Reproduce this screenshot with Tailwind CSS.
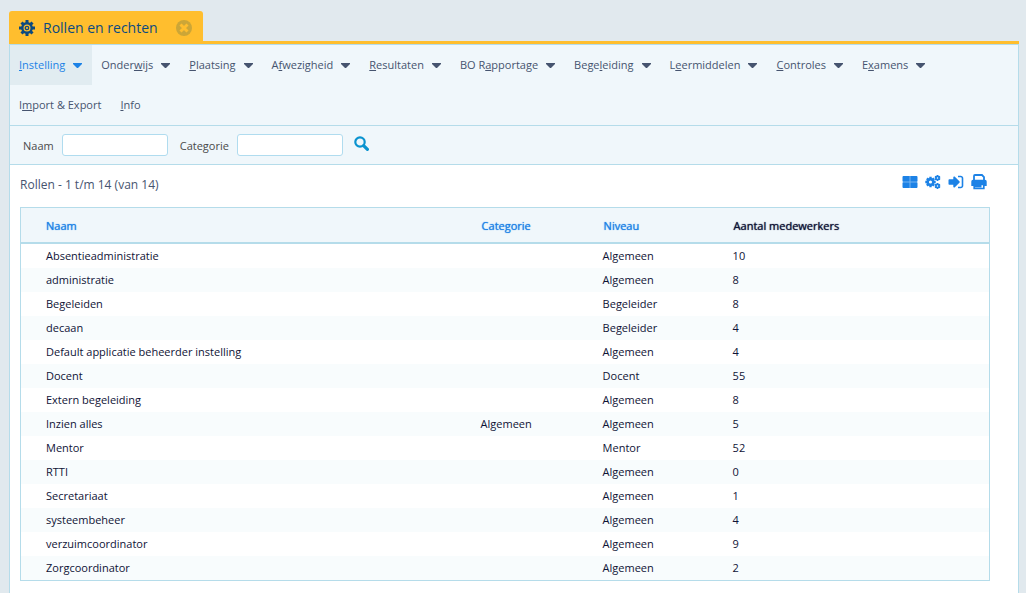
<!DOCTYPE html>
<html lang="nl">
<head>
    <meta charset="UTF-8">
    <meta name="viewport" content="width=device-width, initial-scale=1.0">
    <title>Rollen en rechten</title>
    <script src="https://cdn.jsdelivr.net/npm/@tailwindcss/browser@4"></script>
</head>
<body class="bg-[#e1e9ee] min-h-screen flex flex-col pt-[11px] pl-[9px] pr-[7px] font-['Open_Sans',sans-serif] text-[11px] leading-4 text-[#0f1336]">

    <!-- Tab -->
    <div class="flex border-b-3 border-[#ffbe2e]">
        <div class="flex items-center h-[30px] w-[194px] pl-[10px] pr-[11px] pt-[3px] rounded-t-[3px] bg-[#ffbe2e] text-[#0b4a80]">
            <svg class="size-4" viewBox="0 0 16 16" fill="none" stroke="currentColor">
                <g stroke-width="3">
                    <path d="M8 0v4M8 12v4M0 8h4M12 8h4"/>
                    <path d="M2.500 2.500l2.600 2.600M10.900 10.900l2.600 2.600M2.500 13.500l2.600-2.600M10.900 5.100l2.600-2.600"/>
                </g>
                <circle cx="8" cy="8" r="4.700" stroke-width="2.400"/>
                <circle cx="8" cy="8" r="1.700" stroke-width="1.300"/>
            </svg>
            <h1 class="ml-2 text-[14px] leading-5">Rollen en rechten</h1>
            <button class="ml-auto" aria-label="Tab sluiten">
                <svg class="size-4" viewBox="0 0 16 16">
                    <circle cx="8" cy="8" r="8" fill="#cca637"/>
                    <path d="M4.500 4.500l7 7M11.500 4.500l-7 7" stroke="#ffbe2e" stroke-width="3"/>
                </svg>
            </button>
        </div>
    </div>

    <main class="flex-1 border-x border-t border-[#b5dcea] bg-white">

        <!-- Menu -->
        <nav class="flex flex-wrap border-b border-[#b5dcea] bg-[#f0f7fb] text-[#46546f]" id="menu">
            <a href="#" class="flex items-center gap-2 h-10 pl-[9px] pr-[10px] bg-[#e1ecf1] text-[#1c82e6]"><span><u>I</u>nstelling</span><svg class="w-[9px] h-[5px]" viewBox="0 0 9 5" fill="currentColor"><path d="M0 0h9v1L5 5H4L0 1z"/></svg></a>
            <a href="#" class="flex items-center gap-2 h-10 pl-[9px] pr-[10px]"><span>Onder<u>w</u>ijs</span><svg class="w-[9px] h-[5px]" viewBox="0 0 9 5" fill="currentColor"><path d="M0 0h9v1L5 5H4L0 1z"/></svg></a>
            <a href="#" class="flex items-center gap-2 h-10 pl-[9px] pr-[10px]"><span><u>P</u>laatsing</span><svg class="w-[9px] h-[5px]" viewBox="0 0 9 5" fill="currentColor"><path d="M0 0h9v1L5 5H4L0 1z"/></svg></a>
            <a href="#" class="flex items-center gap-2 h-10 pl-[9px] pr-[10px]"><span>A<u>f</u>wezigheid</span><svg class="w-[9px] h-[5px]" viewBox="0 0 9 5" fill="currentColor"><path d="M0 0h9v1L5 5H4L0 1z"/></svg></a>
            <a href="#" class="flex items-center gap-2 h-10 pl-[9px] pr-[10px]"><span><u>R</u>esultaten</span><svg class="w-[9px] h-[5px]" viewBox="0 0 9 5" fill="currentColor"><path d="M0 0h9v1L5 5H4L0 1z"/></svg></a>
            <a href="#" class="flex items-center gap-2 h-10 pl-[9px] pr-[10px]"><span>BO R<u>a</u>pportage</span><svg class="w-[9px] h-[5px]" viewBox="0 0 9 5" fill="currentColor"><path d="M0 0h9v1L5 5H4L0 1z"/></svg></a>
            <a href="#" class="flex items-center gap-2 h-10 pl-[9px] pr-[10px]"><span>Bege<u>l</u>eiding</span><svg class="w-[9px] h-[5px]" viewBox="0 0 9 5" fill="currentColor"><path d="M0 0h9v1L5 5H4L0 1z"/></svg></a>
            <a href="#" class="flex items-center gap-2 h-10 pl-[9px] pr-[10px]"><span>L<u>e</u>ermiddelen</span><svg class="w-[9px] h-[5px]" viewBox="0 0 9 5" fill="currentColor"><path d="M0 0h9v1L5 5H4L0 1z"/></svg></a>
            <a href="#" class="flex items-center gap-2 h-10 pl-[9px] pr-[10px]"><span><u>C</u>ontroles</span><svg class="w-[9px] h-[5px]" viewBox="0 0 9 5" fill="currentColor"><path d="M0 0h9v1L5 5H4L0 1z"/></svg></a>
            <a href="#" class="flex items-center gap-2 h-10 pl-[9px] pr-[10px]"><span>E<u>x</u>amens</span><svg class="w-[9px] h-[5px]" viewBox="0 0 9 5" fill="currentColor"><path d="M0 0h9v1L5 5H4L0 1z"/></svg></a>
            <a href="#" class="flex items-center h-10 pl-[9px] pr-[10px]"><span>I<u>m</u>port &amp; Export</span></a>
            <a href="#" class="flex items-center h-10 pl-[9px] pr-[10px]"><span><u>I</u>nfo</span></a>
        </nav>

        <!-- Search -->
        <form class="flex items-center h-[39px] pl-[13px] border-b border-[#b5dcea] bg-[#f0f7fb] text-[#4a4a4a]">
            <label for="naam" class="pt-px">Naam</label>
            <input id="naam" type="text" class="ml-2 w-[106px] h-[22px] px-1 rounded-[3px] border border-[#b0dcef] bg-white">
            <label for="categorie" class="ml-3 pt-px">Categorie</label>
            <input id="categorie" type="text" class="ml-2 w-[106px] h-[22px] px-1 rounded-[3px] border border-[#b0dcef] bg-white">
            <button class="ml-[11px] pb-1" aria-label="Zoeken">
                <svg class="size-[15px]" viewBox="0 0 15 15" fill="none" stroke="#0a93cf">
                    <circle cx="6" cy="6" r="4.700" stroke-width="2.200"/>
                    <path d="M9.600 9.600l3.800 3.800" stroke-width="3.200" stroke-linecap="round"/>
                </svg>
            </button>
        </form>

        <section class="pl-[10px] pr-7">
            <div class="flex items-center justify-between h-[42px] pr-[3px]">
                <h2 class="pb-[3px] text-[12px] text-[#46546f]">Rollen - 1 t/m 14 (van 14)</h2>
                <div class="flex gap-[7px] pb-2 text-[#1c82e6]">
                    <button aria-label="Tegels">
                        <svg class="size-4" viewBox="0 0 16 16">
                            <rect x="1" y="2" width="14" height="12" fill="currentColor" opacity=".6"/>
                            <path d="M1.500 2H7.500V7.500H.5V3a1 1 0 0 1 1-1zM8.500 2h6a1 1 0 0 1 1 1v4.500h-7zM.5 8.500h7V14h-6a1 1 0 0 1-1-1zM8.500 8.500h7V13a1 1 0 0 1-1 1h-6z" fill="currentColor"/>
                        </svg>
                    </button>
                    <button aria-label="Instellingen">
                        <svg class="size-4" viewBox="0 0 16 16" fill="none" stroke="currentColor">
                            <path d="M5.500 2.800v10.400M.3 8h10.400M1.900 4.400l7.200 7.200M9.100 4.400l-7.200 7.200" stroke-width="2.400"/>
                            <circle cx="5.500" cy="8" r="2.800" fill="#fff" stroke-width="2.500"/>
                            <path d="M12.500 1v6M9.900 2.500l5.200 3M15.100 2.500l-5.200 3M12.500 9v6M9.900 10.500l5.200 3M15.100 10.500l-5.200 3" stroke-width="1.700"/>
                            <circle cx="12.500" cy="4" r="1.600" fill="#fff" stroke-width="1.700"/>
                            <circle cx="12.500" cy="12" r="1.600" fill="#fff" stroke-width="1.700"/>
                        </svg>
                    </button>
                    <button aria-label="Exporteren">
                        <svg class="size-4" viewBox="0 0 16 16" fill="currentColor">
                            <path d="M1.300 5.300H5.300V3.200c0-.7.700-1.100 1.300-.6l5 4.800c.3.300.3.800 0 1.200l-5 4.800c-.6.500-1.300.1-1.300-.6V10.700H1.300a.8.800 0 0 1-.8-.8V6.100c0-.5.400-.8.800-.8z"/>
                            <path d="M10 2.500h2.700a1.800 1.800 0 0 1 1.800 1.800v7.400a1.800 1.800 0 0 1-1.800 1.800H10" fill="none" stroke="currentColor" stroke-width="1.600"/>
                        </svg>
                    </button>
                    <button aria-label="Afdrukken">
                        <svg class="size-4" viewBox="0 0 16 16">
                            <path d="M3 7V2a1 1 0 0 1 1-1h7l2 2v4" fill="none" stroke="currentColor" stroke-width="1.800"/>
                            <path d="M2 5.800h12a1.700 1.700 0 0 1 1.700 1.700V12H.3V7.500A1.700 1.700 0 0 1 2 5.800z" fill="currentColor"/>
                            <path d="M3.200 10.300h9.600v4.200H3.200z" fill="#fff" stroke="currentColor" stroke-width="1.700"/>
                            <path d="M4 10.500h6.500v3H4z" fill="currentColor"/>
                        </svg>
                    </button>
                </div>
            </div>

            <table class="w-full table-fixed border-separate border-spacing-0 border border-[#b5dcea] text-left">
                <thead class="bg-[#f0f7fb]">
                    <tr class="h-9 *:border-b-2 *:border-[#b5dcea] *:pt-[2px] *:pl-[25px] *:font-medium *:text-shadow-[0_0_1px_currentColor]">
                        <th class="w-[45%]"><a href="#" class="text-[#1c82e6] text-shadow-[0_0_1px_currentColor]">Naam</a></th>
                        <th class="w-[122px]"><a href="#" class="text-[#1c82e6] text-shadow-[0_0_1px_currentColor]">Categorie</a></th>
                        <th class="w-[130px]"><a href="#" class="text-[#1c82e6] text-shadow-[0_0_1px_currentColor]">Niveau</a></th>
                        <th>Aantal medewerkers</th>
                    </tr>
                </thead>
                <tbody id="rollen"></tbody>
            </table>
        </section>
    </main>

    <script>
        const rollen = [
            ["Absentieadministratie", "", "Algemeen", 10],
            ["administratie", "", "Algemeen", 8],
            ["Begeleiden", "", "Begeleider", 8],
            ["decaan", "", "Begeleider", 4],
            ["Default applicatie beheerder instelling", "", "Algemeen", 4],
            ["Docent", "", "Docent", 55],
            ["Extern begeleiding", "", "Algemeen", 8],
            ["Inzien alles", "Algemeen", "Algemeen", 5],
            ["Mentor", "", "Mentor", 52],
            ["RTTI", "", "Algemeen", 0],
            ["Secretariaat", "", "Algemeen", 1],
            ["systeembeheer", "", "Algemeen", 4],
            ["verzuimcoordinator", "", "Algemeen", 9],
            ["Zorgcoordinator", "", "Algemeen", 2]
        ];
        const body = document.getElementById("rollen");

        rollen.forEach((rol) => {
            const row = document.createElement("tr");
            row.className = "h-6 even:bg-[#f8fcfd]";
            rol.forEach((value) => {
                const cell = document.createElement("td");
                cell.className = "pl-6 first:pl-[25px]";
                cell.textContent = value;
                row.appendChild(cell);
            });
            body.appendChild(row);
        });
    </script>

</body>
</html>
